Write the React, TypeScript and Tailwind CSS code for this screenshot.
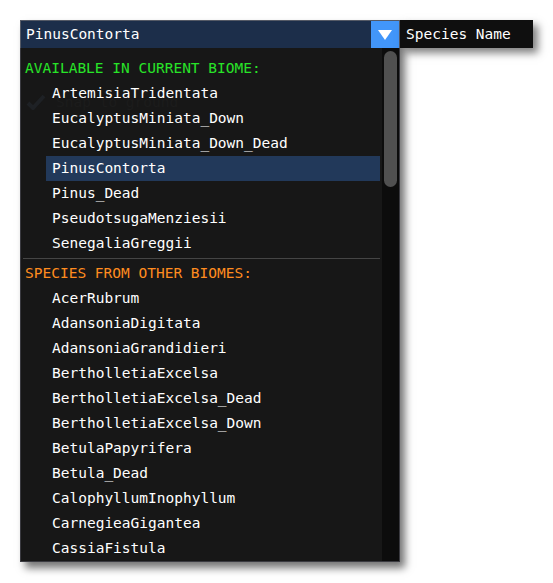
const mono = { fontFamily: '"DejaVu Sans Mono", "Liberation Mono", monospace' };

const current = [
  "ArtemisiaTridentata",
  "EucalyptusMiniata_Down",
  "EucalyptusMiniata_Down_Dead",
  "PinusContorta",
  "Pinus_Dead",
  "PseudotsugaMenziesii",
  "SenegaliaGreggii",
];

const other = [
  "AcerRubrum",
  "AdansoniaDigitata",
  "AdansoniaGrandidieri",
  "BertholletiaExcelsa",
  "BertholletiaExcelsa_Dead",
  "BertholletiaExcelsa_Down",
  "BetulaPapyrifera",
  "Betula_Dead",
  "CalophyllumInophyllum",
  "CarnegieaGigantea",
  "CassiaFistula",
];

const selected = "PinusContorta";

function Item({ name }: { name: string }) {
  const active = name === selected;
  return (
    <div
      className={`ml-[25px] mr-[2px] flex h-[25px] items-center pl-[6px] text-white ${
        active ? "bg-[#22395a]" : ""
      }`}
    >
      {name}
    </div>
  );
}

export default function App() {
  return (
    <div className="min-h-[583px] bg-white pl-[20px] pt-[20px]" style={mono}>
      <div className="flex items-start text-[14.5px] leading-none">
        <div className="flex w-[380px] flex-col shadow-[5px_6px_8px_rgba(0,0,0,0.55)]">
          <div className="flex h-[28px] border border-b-0 border-[#555a66] bg-[#1c2e4a]">
            <div className="flex flex-1 items-center pl-[5px] text-white">{selected}</div>
            <div className="flex w-[28px] items-center justify-center bg-[#4296fa]">
              <svg width="14" height="10" viewBox="0 0 14 10">
                <polygon points="0,0 14,0 7,10" fill="#ffffff" />
              </svg>
            </div>
          </div>
          <div className="relative flex h-[514px] border border-t-0 border-[#3a3a40] bg-[#171717]">
            <div className="pointer-events-none absolute left-[5px] top-[46px] flex items-center gap-[10px] text-[#1c1c1c]">
              <svg width="20" height="16" viewBox="0 0 20 16">
                <path d="M2 9 L7 14 L18 2" stroke="#1e2125" strokeWidth="4" fill="none" />
              </svg>
              <span>Snap to ground</span>
            </div>
            <div className="relative flex-1 pt-[8px]">
              <div className="flex h-[25px] items-center pl-[4px] text-[#28e428]">
                AVAILABLE IN CURRENT BIOME:
              </div>
              {current.map((n) => (
                <Item key={n} name={n} />
              ))}
              <div className="flex h-[5px] items-center pl-[2px] pr-[2px]">
                <div className="h-px w-full bg-[#454545]" />
              </div>
              <div className="flex h-[25px] items-center pl-[4px] text-[#ff8c1f]">
                SPECIES FROM OTHER BIOMES:
              </div>
              {other.map((n) => (
                <Item key={n} name={n} />
              ))}
            </div>
            <div className="w-[17px] bg-[#0c0c0c] px-[2px] pt-[3px]">
              <div className="h-[136px] rounded-full bg-[#505050]" />
            </div>
          </div>
        </div>
        <div className="flex h-[28px] w-[133px] items-center bg-[#0f0f0f] pl-[6px] text-white shadow-[5px_5px_8px_rgba(0,0,0,0.5)]">
          Species Name
        </div>
      </div>
    </div>
  );
}
